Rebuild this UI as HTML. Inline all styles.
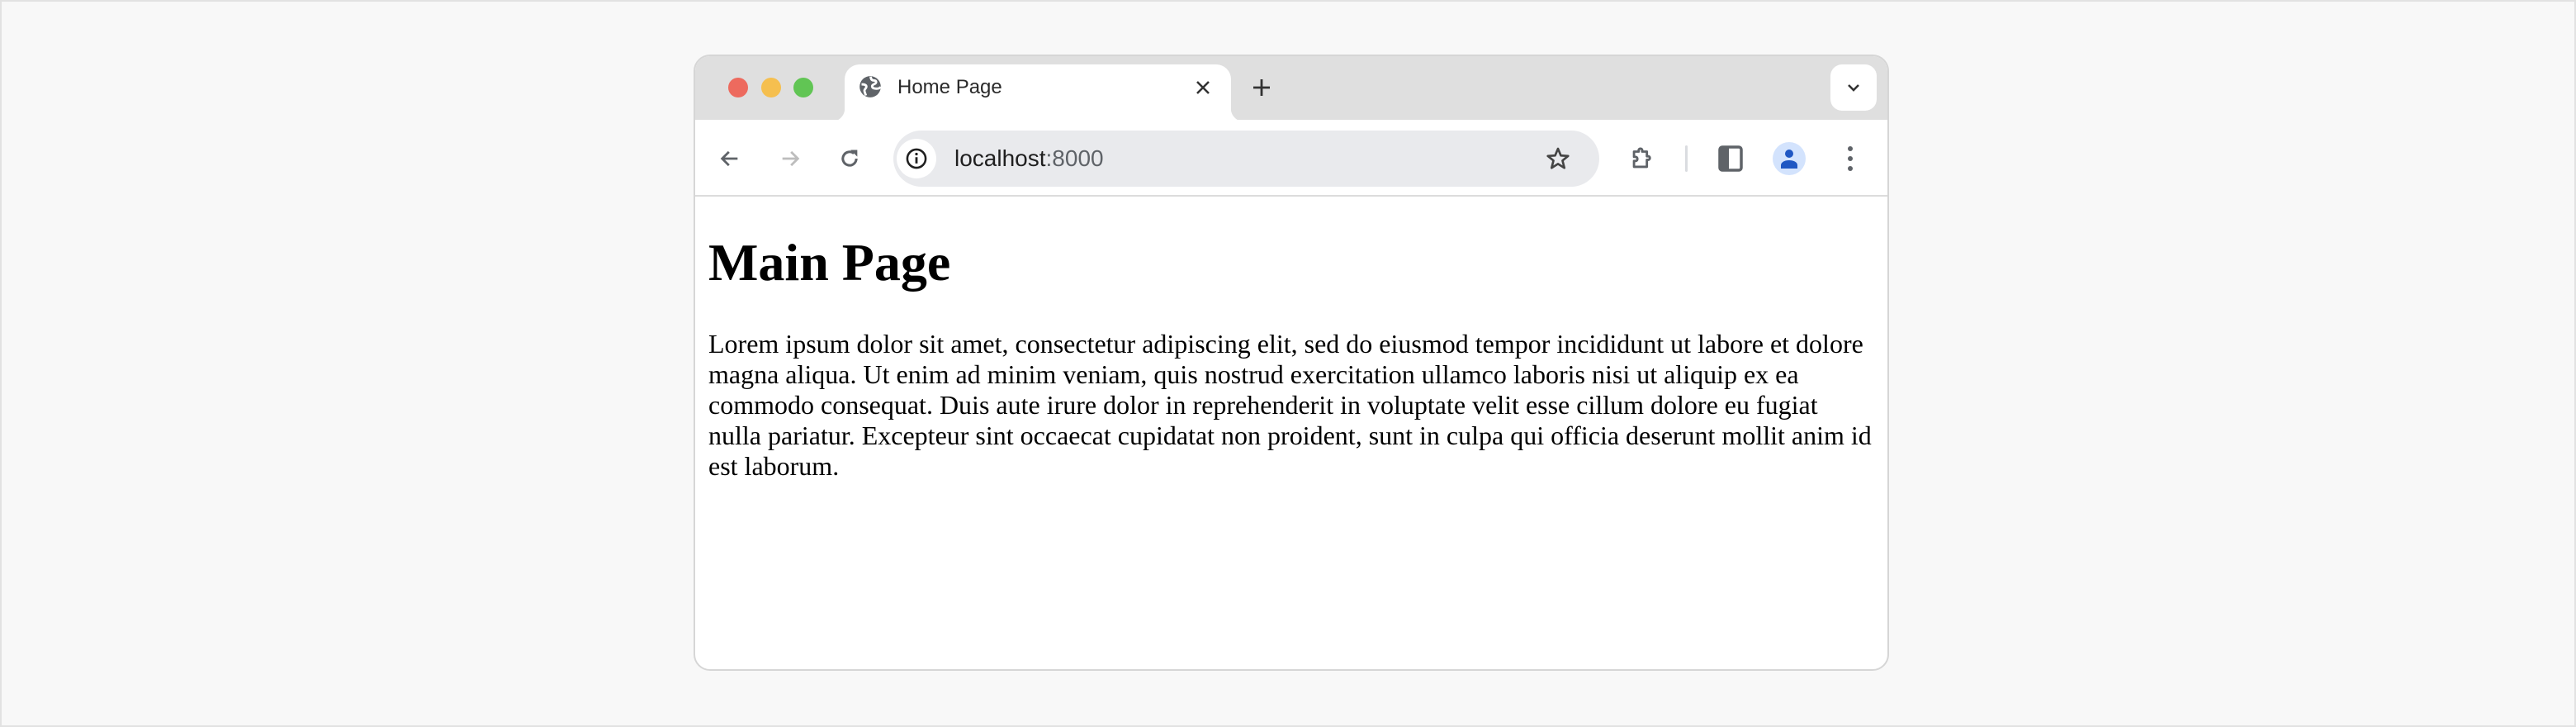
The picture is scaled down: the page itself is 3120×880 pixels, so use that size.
<!DOCTYPE html>
<html><head><meta charset="utf-8"><style>
html,body{margin:0;padding:0;}
body{width:3120px;height:880px;background:#f8f8f8;position:relative;overflow:hidden;box-sizing:border-box;border:2px solid #e2e2e2;}
.win{position:absolute;left:838px;top:64px;width:1448px;height:746px;border-radius:20px;border:2px solid #d6d6d6;background:#fff;overflow:hidden;box-sizing:border-box;}
.strip{position:absolute;left:0;top:0;width:100%;height:77px;background:#dfdfdf;}
.dot{position:absolute;top:26px;width:24px;height:24px;border-radius:50%;}
.tab{position:absolute;left:181px;top:10px;width:468px;height:69px;background:#fff;border-radius:18px 18px 0 0;}
.tab:before,.tab:after{content:"";position:absolute;bottom:0;width:16px;height:16px;}
.tab:before{left:-16px;background:radial-gradient(circle at 0 0,#dfdfdf 16px,#fff 16.5px);}
.tab:after{right:-16px;background:radial-gradient(circle at 100% 0,#dfdfdf 16px,#fff 16.5px);}
.tabt{position:absolute;left:64px;top:14px;font:24px "Liberation Sans",sans-serif;color:#2a2a2a;}
.tool{position:absolute;left:0;top:77px;width:100%;height:91px;background:#fff;border-bottom:2px solid #dcdcdc;}
.omni{position:absolute;left:240px;top:13px;width:855px;height:68px;border-radius:34px;background:#e9eaed;}
.url{position:absolute;left:74px;top:18px;font:28px "Liberation Sans",sans-serif;color:#1f1f1f;}
.content{position:absolute;left:0;top:170px;width:100%;padding:0 0 0 16px;box-sizing:border-box;font-family:"Liberation Serif",serif;color:#000;}
h1{font-size:64px;margin:43px 0;line-height:1.15;}
p{font-size:32px;line-height:37px;margin:0;white-space:nowrap;}
svg{position:absolute;}
</style></head><body>
<div class="win">
 <div class="strip">
  <div class="dot" style="left:40px;background:#ed6a5e;"></div>
  <div class="dot" style="left:80px;background:#f5bf4f;"></div>
  <div class="dot" style="left:119px;background:#61c554;"></div>
  <div class="tab">
   <svg style="left:17px;top:13px" width="28" height="28" viewBox="0 0 24 24"><circle cx="12" cy="12" r="11" fill="#5f6368"/><path d="M3 9.5c3 0 5 .5 5 2.5s-2 2-2 4 1 3 1.5 5M12.5 1.5c0 2.5 1 4 3.5 4s2.5 2 1.5 3-3.5 1-3.5 3 2 2.5 4.5 2.5 4-1 4.5-2" stroke="#fff" stroke-width="2.4" fill="none"/></svg>
   <div class="tabt">Home Page</div>
   <svg style="left:424px;top:18px" width="20" height="20" viewBox="0 0 20 20"><path d="M3 3L17 17M17 3L3 17" stroke="#333" stroke-width="2.6"/></svg>
  </div>
  <svg style="left:674px;top:26px" width="24" height="24" viewBox="0 0 24 24"><path d="M12 2V22M2 12H22" stroke="#333" stroke-width="2.8"/></svg>
  <div style="position:absolute;left:1375px;top:10px;width:56px;height:56px;background:#fff;border-radius:14px;"></div>
  <svg style="left:1394px;top:31px" width="18" height="14" viewBox="0 0 18 14"><path d="M3 4L9 10L15 4" stroke="#333" stroke-width="2.6" fill="none"/></svg>
 </div>
 <div class="tool">
  <svg style="left:28px;top:33px" width="28" height="28" viewBox="0 0 24 24"><path d="M20 12H5M11 5L4 12L11 19" stroke="#5f6368" stroke-width="2.4" fill="none"/></svg>
  <svg style="left:101px;top:33px" width="28" height="28" viewBox="0 0 24 24"><path d="M4 12H19M13 5L20 12L13 19" stroke="#bdbdbd" stroke-width="2.4" fill="none"/></svg>
  <svg style="left:173px;top:33px" width="28" height="28" viewBox="0 0 24 24"><path d="M19 12A7 7 0 1 1 16.5 6.6" stroke="#5f6368" stroke-width="2.6" fill="none"/><path d="M13 3H20V10Z" fill="#5f6368"/></svg>
  <div class="omni">
   <div style="position:absolute;left:4px;top:10px;width:48px;height:48px;border-radius:50%;background:#fff;"></div>
   <svg style="left:14px;top:20px" width="28" height="28" viewBox="0 0 24 24"><circle cx="12" cy="12" r="9.5" stroke="#1f1f1f" stroke-width="2.2" fill="none"/><path d="M12 10.5V17" stroke="#1f1f1f" stroke-width="2.4"/><circle cx="12" cy="7.3" r="1.4" fill="#1f1f1f"/></svg>
   <div class="url">localhost<span style="color:#5f6368">:8000</span></div>
   <svg style="left:789px;top:18px" width="32" height="32" viewBox="0 0 24 24"><path d="M12 3L14.6 9.2L21.2 9.6L16.1 13.8L17.8 20.4L12 16.8L6.2 20.4L7.9 13.8L2.8 9.6L9.4 9.2Z" stroke="#444" stroke-width="2" fill="none" stroke-linejoin="round"/></svg>
  </div>
  <svg style="left:1130px;top:30px" width="34" height="34" viewBox="0 0 24 24"><path d="M5 6H9V4.5A1.6 1.6 0 0 1 12 4.5V6H16V10H17.5A1.6 1.6 0 0 1 17.5 13H16V19H5V14H6.5A1.8 1.8 0 0 0 6.5 10.5H5Z" stroke="#5f6368" stroke-width="2" fill="none" stroke-linejoin="round"/></svg>
  <div style="position:absolute;left:1199px;top:31px;width:3px;height:32px;background:#dadce0;border-radius:2px;"></div>
  <svg style="left:1239px;top:31px" width="30" height="32" viewBox="0 0 30 32"><rect x="2" y="2" width="26" height="28" rx="3" stroke="#5f6368" stroke-width="3.5" fill="none"/><rect x="2" y="2" width="11" height="28" fill="#5f6368"/></svg>
  <div style="position:absolute;left:1305px;top:27px;width:40px;height:40px;border-radius:50%;background:#d3e3fd;"></div>
  <svg style="left:1313px;top:33px" width="24" height="28" viewBox="0 0 24 28"><circle cx="12" cy="8" r="5" fill="#1f57c3"/><path d="M2 26V22C2 18 7 16 12 16S22 18 22 22V26Z" fill="#1f57c3"/></svg>
  <svg style="left:1395px;top:31px" width="8" height="32" viewBox="0 0 8 32"><circle cx="4" cy="4" r="3" fill="#5f6368"/><circle cx="4" cy="16" r="3" fill="#5f6368"/><circle cx="4" cy="28" r="3" fill="#5f6368"/></svg>
 </div>
 <div class="content">
  <h1>Main Page</h1>
  <p>Lorem ipsum dolor sit amet, consectetur adipiscing elit, sed do eiusmod tempor incididunt ut labore et dolore<br>magna aliqua. Ut enim ad minim veniam, quis nostrud exercitation ullamco laboris nisi ut aliquip ex ea<br>commodo consequat. Duis aute irure dolor in reprehenderit in voluptate velit esse cillum dolore eu fugiat<br>nulla pariatur. Excepteur sint occaecat cupidatat non proident, sunt in culpa qui officia deserunt mollit anim id<br>est laborum.</p>
 </div>
</div>
</body></html>
